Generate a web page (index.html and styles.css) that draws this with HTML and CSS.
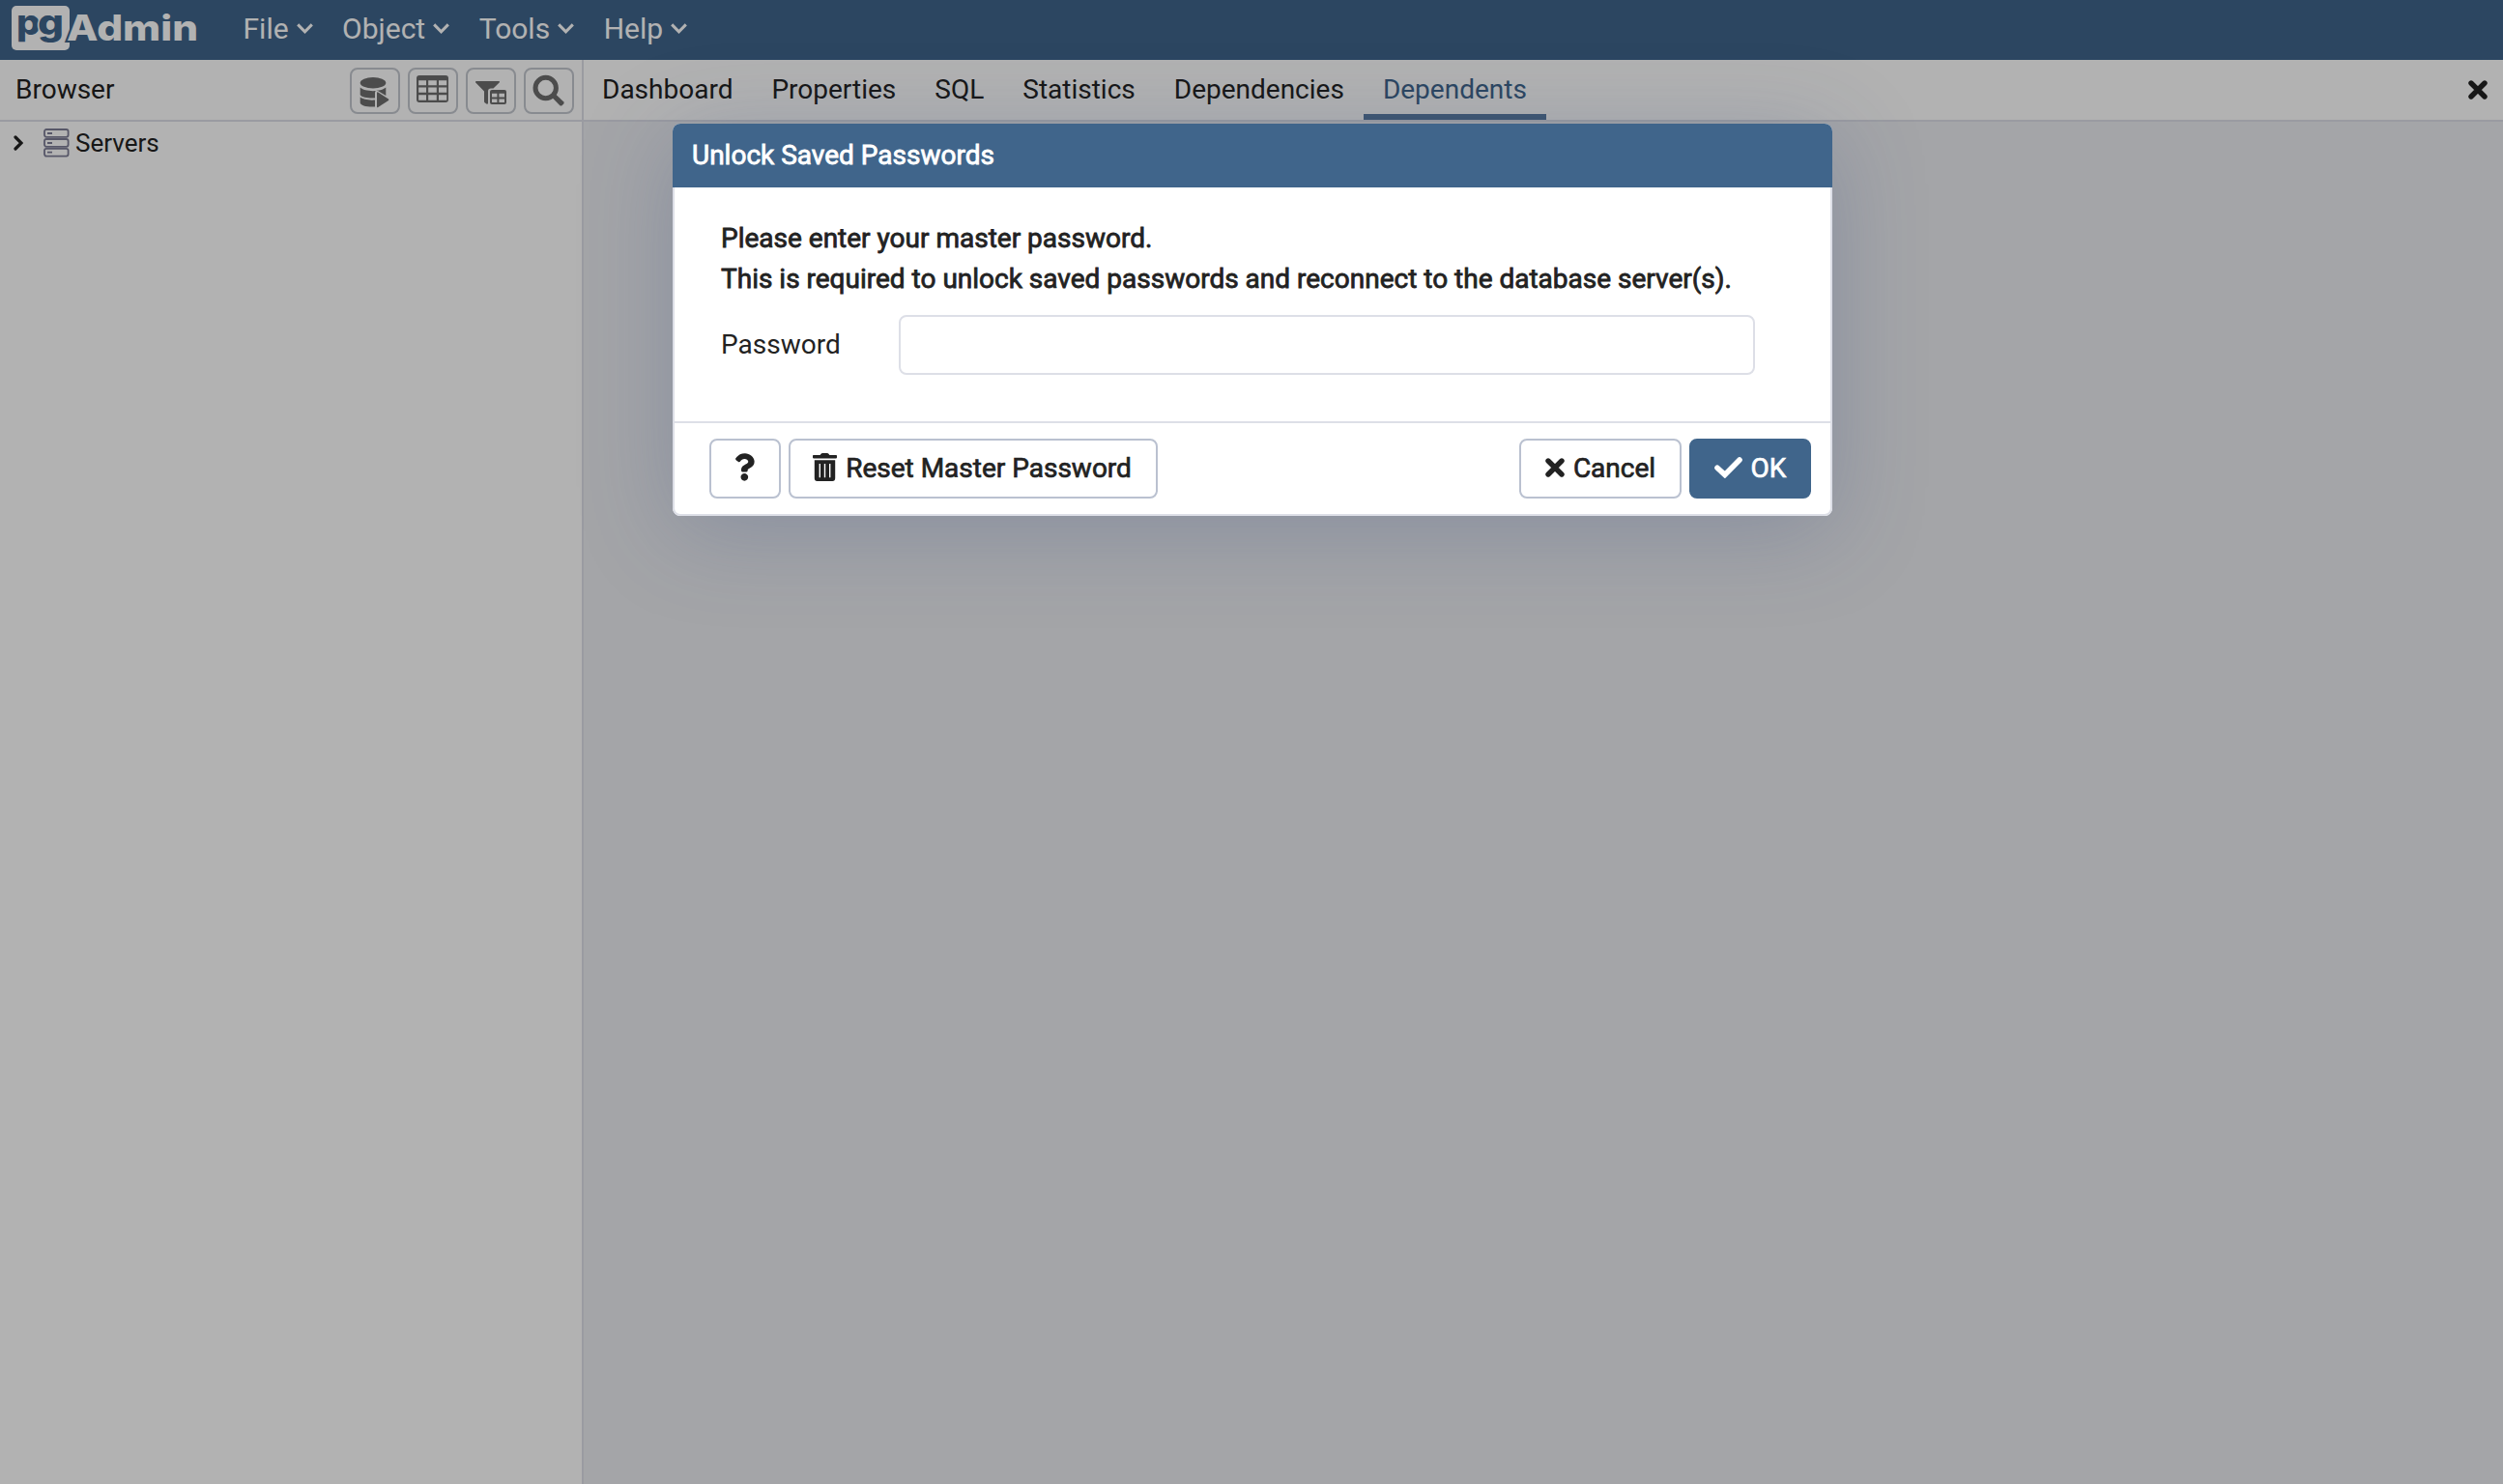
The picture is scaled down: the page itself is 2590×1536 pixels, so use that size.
FILE: index.html
```html
<!DOCTYPE html>
<html lang="en">
<head>
<meta charset="utf-8">
<title>pgAdmin</title>
<link rel="stylesheet" href="styles.css">
</head>
<body>
<div class="app">
  <nav class="navbar">
    <svg class="logo" viewBox="0 0 200 62" width="200" height="62">
      <rect class="logo-box" x="0" y="6" width="60" height="46" rx="5"/>
      <text class="logo-p" x="5" y="36" textLength="25" lengthAdjust="spacingAndGlyphs">p</text>
      <text class="logo-g" x="27" y="36" textLength="27" lengthAdjust="spacingAndGlyphs">g</text>
      <text class="logo-admin" x="57" y="42" textLength="136" lengthAdjust="spacingAndGlyphs">Admin</text>
    </svg>
    <ul class="menu">
      <li class="menu-item">File<svg class="caret" viewBox="0 0 17 11"><path d="M1.2 1.4 8.5 8.8 15.8 1.4"/></svg></li>
      <li class="menu-item">Object<svg class="caret" viewBox="0 0 17 11"><path d="M1.2 1.4 8.5 8.8 15.8 1.4"/></svg></li>
      <li class="menu-item">Tools<svg class="caret" viewBox="0 0 17 11"><path d="M1.2 1.4 8.5 8.8 15.8 1.4"/></svg></li>
      <li class="menu-item">Help<svg class="caret" viewBox="0 0 17 11"><path d="M1.2 1.4 8.5 8.8 15.8 1.4"/></svg></li>
    </ul>
  </nav>
  <main class="workspace">
    <aside class="browser">
      <header class="panel-head">
        <span class="panel-title">Browser</span>
        <div class="tools">
          <button class="tool" aria-label="Query tool"><svg viewBox="0 0 48 44">
            <ellipse cx="22" cy="13.7" rx="13.3" ry="5.7"/>
            <path d="M8.7 18.6C13 23.2 30 23.6 35.3 18.6V27L26.5 21.8Q24 21.5 24 24V29.4C17 29.8 10.5 28.6 8.7 26.2z"/>
            <path d="M8.7 28.6C11.5 31 18 32 24 31.5V38.4C15.5 38.9 9 37 8.7 34.4z"/>
            <path d="M26 24.2Q26 22.8 27.2 23.4L38 30.6Q38.8 31.3 38 32L27.2 39Q26 39.6 26 38.2z"/>
          </svg></button>
          <button class="tool" aria-label="View data"><svg viewBox="0 0 48 44">
            <path fill-rule="evenodd" d="M10 6H37Q40 6 40 9V31Q40 34 37 34H10Q7 34 7 31V9Q7 6 10 6zM9.2 11.2V16.2H17V11.2zM19.2 11.2V16.2H27.8V11.2zM30 11.2V16.2H38.2V11.2zM9.2 18.6V23.8H17V18.6zM19.2 18.6V23.8H27.8V18.6zM30 18.6V23.8H38.2V18.6zM9.2 26.2V31.7H17V26.2zM19.2 26.2V31.7H27.8V26.2zM30 26.2V31.7H38.2V26.2z"/>
          </svg></button>
          <button class="tool" aria-label="Filtered rows"><svg viewBox="0 0 48 44">
            <path d="M8.6 12H32.4Q33.4 12.6 32.6 13.6L26.5 19.4H24Q21 19.4 21 22.4V35Q20.6 36 19.4 35.4L17.6 34.2Q17 33.8 17 33V22.6L8.2 13.6Q7.6 12.6 8.6 12z"/>
            <path fill-rule="evenodd" d="M25 21H38Q40 21 40 23V34Q40 36 38 36H25Q23 36 23 34V23Q23 21 25 21zM25 24.8V28.4H30.4V24.8zM32.4 24.8V28.4H38V24.8zM25 30.4V34H30.4V30.4zM32.4 30.4V34H38V30.4z"/>
          </svg></button>
          <button class="tool" aria-label="Search objects"><svg viewBox="0 0 48 44">
            <circle class="lens" cx="20.7" cy="19" r="10.7"/>
            <path d="M29 26.2 31 25.6 39.4 33.6Q40 34.6 39.2 35.6L37.2 37.4Q36.4 37.8 35.4 37.2L27.6 29.2z"/>
          </svg></button>
        </div>
      </header>
      <div class="tree-row">
        <svg class="twisty" viewBox="0 0 10 16"><path d="M2 2 8 8 2 14"/></svg>
        <svg class="servers" viewBox="0 0 27 30">
          <rect x="1" y="1" width="24.6" height="7.8" rx="2"/><rect x="1" y="11" width="24.6" height="7.8" rx="2"/><rect x="1" y="20.8" width="24.6" height="7.8" rx="2"/>
          <path d="M4 5h5M4 15h5M4 24.6h5"/>
        </svg>
        <span class="tree-label">Servers</span>
      </div>
    </aside>
    <section class="content">
      <header class="tabs">
        <span class="tab tab-first">Dashboard</span><span class="tab">Properties</span><span class="tab">SQL</span><span class="tab">Statistics</span><span class="tab">Dependencies</span><span class="tab tab-active">Dependents</span>
        <svg class="cross tabs-close" viewBox="0 0 20 20"><path d="M3 3 17 17M17 3 3 17"/></svg>
      </header>
    </section>
  </main>
</div>
<div class="overlay">
  <div class="dialog" role="dialog">
    <header class="dialog-head">Unlock Saved Passwords</header>
    <div class="dialog-body">
      <p class="message">Please enter your master password.<br>This is required to unlock saved passwords and reconnect to the database server(s).</p>
      <div class="field"><label class="field-label" for="pw">Password</label><input class="field-input" id="pw" type="password"></div>
    </div>
    <footer class="dialog-foot">
      <button class="btn btn-help" aria-label="Help"><svg class="question" viewBox="24 0 360 512"><path d="M202.021 0C122.202 0 70.503 32.703 29.914 91.026c-7.363 10.58-5.093 25.086 5.178 32.874l43.138 32.709c10.373 7.865 25.132 6.026 33.253-4.148 25.049-31.381 43.63-49.449 82.757-49.449 30.764 0 68.816 19.799 68.816 49.631 0 22.552-18.617 34.134-48.993 51.164-35.423 19.86-82.299 44.576-82.299 106.405V320c0 13.255 10.745 24 24 24h72.471c13.255 0 24-10.745 24-24v-5.773c0-42.86 125.268-44.645 125.268-160.627C377.504 66.256 286.902 0 202.021 0zM192 373.459c-38.196 0-69.271 31.075-69.271 69.271 0 38.195 31.075 69.27 69.271 69.27s69.271-31.075 69.271-69.271-31.075-69.27-69.271-69.27z"/></svg></button>
      <button class="btn btn-reset"><svg class="trash" viewBox="0 0 25 29"><path fill-rule="evenodd" d="M.8 2H7.6L8.8.6Q9.2 0 10 0H15Q15.8 0 16.2.6L17.4 2H24.2Q25 2 25 2.8V4.6Q25 5.4 24.2 5.4H.8Q0 5.4 0 4.6V2.8Q0 2 .8 2zM1.8 7.2H23.2V26Q23.2 29 20.4 29H4.6Q1.8 29 1.8 26zM6.6 11V25.2H8V11zM11.8 11V25.2H13.2V11zM17 11V25.2H18.4V11z"/></svg>Reset Master Password</button>
      <span class="spacer"></span>
      <button class="btn btn-cancel"><svg class="cross" viewBox="0 0 20 20"><path d="M3 3 17 17M17 3 3 17"/></svg>Cancel</button>
      <button class="btn btn-ok"><svg class="check" viewBox="0 0 29 22"><path d="M3 11.2 10.8 18.4 26 3"/></svg>OK</button>
    </footer>
  </div>
</div>
</body>
</html>
```
FILE: styles.css
```css
* { box-sizing: border-box; }
body {
  margin: 0;
  overflow: hidden;
  font: 28px/42px Roboto, sans-serif;
  color: #222;
}
svg { flex: none; }
button { font: inherit; color: inherit; }

.app { display: flex; flex-direction: column; height: 1536px; }

.navbar {
  display: flex;
  align-items: center;
  height: 62px;
  padding-left: 12px;
  background: #40658b;
  color: #fff;
  font-size: 30px;
}
.logo { display: block; }
.logo-box { fill: #fff; }
.logo text { font-family: Inter, sans-serif; font-weight: 800; font-size: 37px; }
.logo .logo-p { fill: #40658b; }
.logo .logo-g { fill: #40658b; stroke: #fff; stroke-width: 3px; paint-order: stroke; }
.logo .logo-admin { fill: #fff; stroke: #40658b; stroke-width: 4px; paint-order: stroke; }
.menu {
  display: flex;
  gap: 30.5px;
  margin: 0 0 0 39.5px;
  padding: 0 0 2px;
  list-style: none;
}
.menu-item { display: flex; align-items: center; gap: 8px; height: 42px; }
.caret { width: 17px; height: 11px; fill: none; stroke: #fff; stroke-width: 3; margin-top: -1px; }

.workspace { display: flex; flex: 1; min-height: 0; }
.browser { width: 604px; border-right: 2px solid #dddfe7; background: #fff; }
.panel-head {
  display: flex;
  align-items: center;
  justify-content: space-between;
  height: 64px;
  padding: 0 8px 0 16px;
  border-bottom: 2px solid #dddfe7;
}
.tools { display: flex; gap: 8px; padding-top: 2px; }
.tool {
  width: 52px;
  height: 48px;
  padding: 0;
  border: 2px solid #c3c7ce;
  border-radius: 8px;
  background: #fff;
}
.tool svg { display: block; width: 48px; height: 44px; fill: #6e6e6e; }
.tool .lens { fill: none; stroke: #6e6e6e; stroke-width: 5; }

.tree-row { display: flex; align-items: center; height: 43px; padding-left: 14px; }
.twisty { width: 10px; height: 16px; fill: none; stroke: #222; stroke-width: 3.2; stroke-linecap: round; }
.servers { width: 27px; height: 30px; margin-left: 21px; fill: none; stroke: #7d7d96; stroke-width: 1.8; }
.tree-label { margin-left: 6px; font-size: 26px; }

.content { flex: 1; background: #ebedf1; }
.tabs {
  display: flex;
  height: 64px;
  background: #fff;
  border-bottom: 2px solid #dddfe7;
}
.tab { height: 62px; padding: 10px 20px 0; border-bottom: 6px solid transparent; }
.tab-first { padding-left: 19px; }
.tab-active { color: #40658b; border-bottom-color: #5a7ca3; }
.cross { width: 20px; height: 20px; fill: none; stroke: #222; stroke-width: 5.4; stroke-linecap: round; }
.tabs-close { margin: 21px 16px 0 auto; }

.overlay {
  position: absolute;
  inset: 0;
  display: flex;
  align-items: flex-start;
  padding: 128px 0 0 696px;
  background: rgba(0, 0, 0, .3);
}
.dialog {
  width: 1200px;
  height: 406px;
  display: flex;
  flex-direction: column;
  border-radius: 8px;
  background: #fff;
  box-shadow: 0 16px 96px rgba(53, 78, 130, .26);
}
.dialog-head {
  height: 66px;
  padding: 12px 20px;
  border-radius: 8px 8px 0 0;
  background: #40658b;
  color: #fff;
  -webkit-text-stroke: .8px currentColor;
}
.dialog-body {
  flex: 1;
  padding: 32px 78px 0 48px;
  border: solid #dddfe7;
  border-width: 0 2px;
}
.message { margin: 0; -webkit-text-stroke: .8px currentColor; }
.field { display: flex; align-items: center; justify-content: space-between; margin-top: 16px; }
.field-input {
  width: 886px;
  height: 62px;
  border: 2px solid #dddfe7;
  border-radius: 8px;
  background: #fff;
}
.dialog-foot {
  display: flex;
  gap: 8px;
  height: 98px;
  padding: 16px 20px 0 36px;
  border: 2px solid #dddfe7;
  border-radius: 0 0 8px 8px;
}
.spacer { flex: 1; }
.btn {
  display: flex;
  align-items: center;
  justify-content: center;
  gap: 9px;
  height: 62px;
  padding: 0;
  border: 2px solid #bac1d0;
  border-radius: 8px;
  background: #fff;
  -webkit-text-stroke: .7px currentColor;
}
.btn-help { width: 74px; }
.btn-reset { width: 382px; padding-right: 2px; }
.btn-cancel { width: 168px; }
.btn-ok { width: 126px; background: #40658b; border-color: #40658b; color: #fff; }
.question { width: 20px; height: 29px; fill: #222; margin-top: -3px; }
.trash { width: 25px; height: 29px; fill: #222; margin-top: -3px; }
.btn .cross { margin-top: -3px; }
.check { width: 29px; height: 22px; fill: none; stroke: #fff; stroke-width: 5.6; stroke-linecap: round; margin-top: -3px; }
```
